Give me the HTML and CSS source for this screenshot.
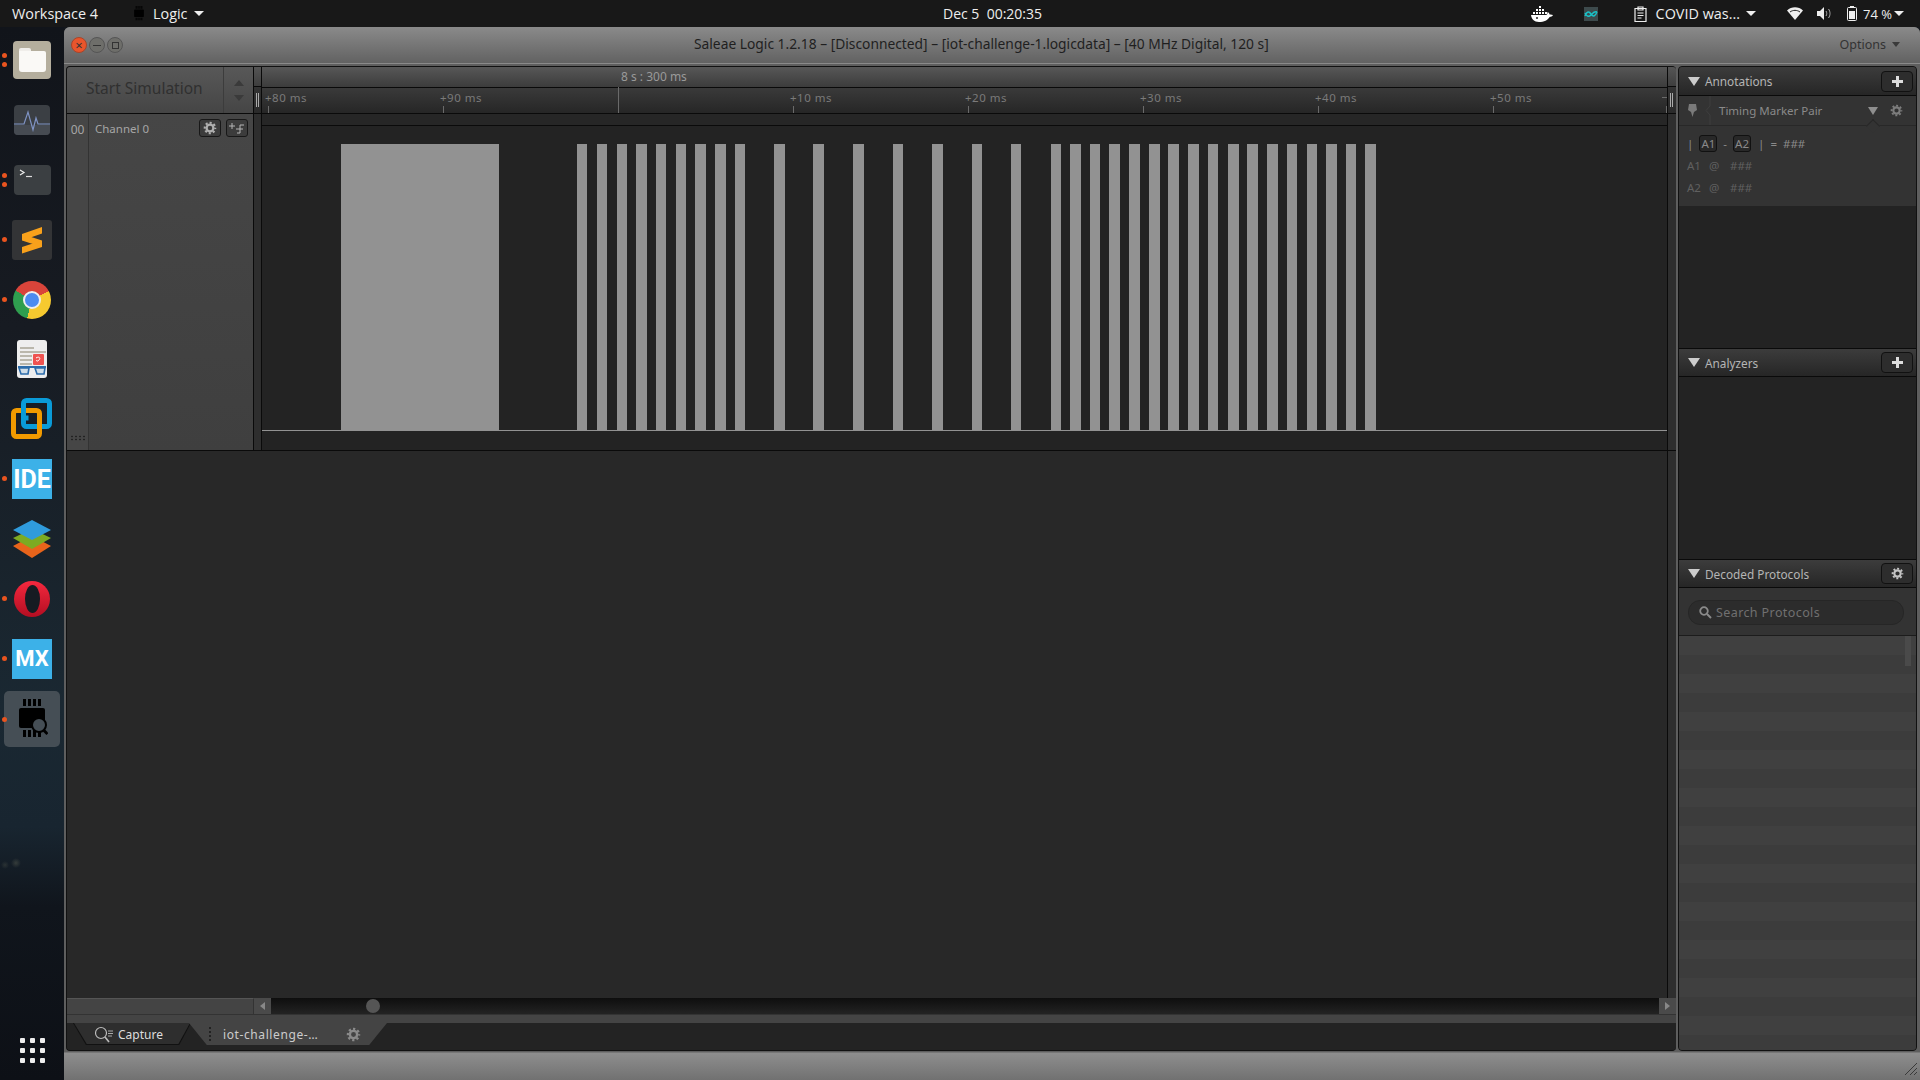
FILE: index.html
```html
<!DOCTYPE html>
<html lang="en">
<head>
    <meta charset="UTF-8">
    <meta name="viewport" content="width=device-width, initial-scale=1.0">
    <title>Saleae Logic</title>
    <link rel="stylesheet" href="styles.css">
</head>
<body>
    <svg class="defs" width="0" height="0">
        <defs>
            <symbol id="gear" viewBox="0 0 16 16">
                <circle cx="8" cy="8" r="3.9" fill="none" stroke="currentColor" stroke-width="2.6"/>
                <circle cx="8" cy="8" r="6" fill="none" stroke="currentColor" stroke-width="2.4" stroke-dasharray="2.4 2.31" stroke-dashoffset="1.2"/>
            </symbol>
            <symbol id="chip" viewBox="0 0 32 40">
                <path d="M7 0h3v7H7zM12 0h3v7h-3zM17 0h3v7h-3zM22 0h3v7h-3zM7 31h3v7H7zM12 31h3v7h-3zM17 31h3v7h-3zM22 31h3v7h-3z" fill="#000"/>
                <rect x="3" y="9" width="26" height="20" rx="2" fill="#000"/>
            </symbol>
        </defs>
    </svg>

    <header class="topbar">
        <div class="top-left">
            <span class="workspace">Workspace 4</span>
            <svg class="top-chip" width="12" height="15" viewBox="0 0 32 40"><use href="#chip"/></svg>
            <span class="app-name">Logic</span>
            <span class="caret"></span>
        </div>
        <div class="clock">Dec 5&nbsp;&nbsp;00:20:35</div>
        <div class="top-right">
            <svg class="tray-docker" width="22" height="16" viewBox="0 0 22 16">
                <path d="M8 0h2v2H8zM5 3h2v2H5zM8 3h2v2H8zM11 3h2v2h-2zM2 6h2v2H2zM5 6h2v2H5zM8 6h2v2H8zM11 6h2v2h-2zM14 6h2v2h-2z" fill="#fff"/>
                <path d="M0 9h15c1 0 1.500-1 1.600-3 1.200 .5 1.800 1.500 2 2.500 1.200-.3 2.400 0 3.400 .6-.8 1.400-2 1.900-3.400 1.900C17 14 13 16 8 16 3 16 .5 13 0 9z" fill="#fff"/>
                <circle cx="6" cy="12" r="1" fill="#222"/>
            </svg>
            <svg class="tray-teal" width="14" height="14" viewBox="0 0 14 14">
                <rect width="14" height="14" fill="#3d4a4c"/>
                <path d="M1 9c2-5 4-5 6-2s4 3 6-2M1 6c2 4 4 4 6 2s3-4 6-3" fill="none" stroke="#19c3c9" stroke-width="1.400"/>
            </svg>
            <svg class="tray-clip" width="13" height="16" viewBox="0 0 13 16">
                <path d="M1 2.500h11v13H1z M4 1h5v3H4z" fill="none" stroke="#eee" stroke-width="1.200"/>
                <path d="M3.500 7h6M3.500 9.500h6M3.500 12h4" stroke="#eee" stroke-width="1.200"/>
            </svg>
            <span class="covid">COVID was...</span>
            <span class="caret"></span>
            <svg class="tray-wifi" width="16" height="13" viewBox="0 0 16 13">
                <path d="M0 3.500C4.500-.7 11.500-.7 16 3.500L8 13z" fill="#eee"/>
                <path d="M3 5c3-2.200 7-2.200 10 0" fill="none" stroke="#222" stroke-width="1"/>
            </svg>
            <svg class="tray-sound" width="15" height="13" viewBox="0 0 15 13">
                <path d="M0 4h3l4-4v13L3 9H0z" fill="#eee"/>
                <path d="M9 4c1 1.500 1 3.500 0 5M11.500 2c2 2.500 2 6.500 0 9" fill="none" stroke="#aaa" stroke-width="1"/>
            </svg>
            <svg class="tray-battery" width="10" height="15" viewBox="0 0 10 15">
                <path d="M3 0h4v1.500H3z" fill="#eee"/>
                <rect x=".5" y="1.500" width="9" height="13" rx="1" fill="none" stroke="#eee"/>
                <rect x="2" y="5" width="6" height="8" fill="#eee"/>
            </svg>
            <span class="battery">74 %</span>
            <span class="caret"></span>
        </div>
    </header>

    <div class="desktop">
        <nav class="dock">
            <div class="dock-item">
                <span class="dot dot-two"></span>
                <div class="files-icon"><span class="folder"></span></div>
            </div>
            <div class="dock-item">
                <svg width="38" height="32" viewBox="0 0 38 32">
                    <rect x="1" y="1" width="36" height="30" rx="4" fill="#3b3f44"/>
                    <path d="M1 21a0 0 0 0 0 0 0h36v6a4 4 0 0 1-4 4H5a4 4 0 0 1-4-4z" fill="#464b52"/>
                    <path d="M1 20h10l4-12 5 18 3-12 2 6h12" fill="none" stroke="#7f93c4" stroke-width="1.200"/>
                </svg>
            </div>
            <div class="dock-item">
                <span class="dot dot-two"></span>
                <div class="term-icon">
                    <svg width="14" height="10" viewBox="0 0 14 10">
                        <path d="M1 1l4 2.500-4 2.500" fill="none" stroke="#eee" stroke-width="1.200"/>
                        <path d="M7 7.500h6" stroke="#ddd" stroke-width="1.200"/>
                    </svg>
                </div>
            </div>
            <div class="dock-item">
                <span class="dot"></span>
                <svg width="40" height="40" viewBox="0 0 40 40">
                    <rect width="40" height="40" rx="3" fill="#333436"/>
                    <path d="M10 14L30 7v6.500L10 20.500zM30 27L10 20.500V14l20 6.500zM10 27l20-6.500V27L10 33.500z" fill="#f9a11b"/>
                </svg>
            </div>
            <div class="dock-item">
                <span class="dot"></span>
                <div class="chrome-icon"><span class="chrome-eye"></span></div>
            </div>
            <div class="dock-item">
                <svg width="32" height="38" viewBox="0 0 32 38">
                    <rect x="1" width="30" height="38" rx="3" fill="#eee"/>
                    <path d="M4 8h14M4 12h26M4 16h12M4 20h12M4 24h12" stroke="#a9a597" stroke-width="1.500"/>
                    <rect x="17" y="14" width="11" height="11" rx="1" fill="#ef5350"/>
                    <path d="M20 18c3-2 5 0 3 2s-3 1-2 0" fill="none" stroke="#fff" stroke-width="1"/>
                    <path d="M2 27h28" stroke="#2c6cab" stroke-width="2"/>
                    <path d="M3 28h10l-1 6H5zM19 28h10l-1 6h-7z" fill="#cfdde8" stroke="#2c6cab" stroke-width="1.600"/>
                </svg>
            </div>
            <div class="dock-item">
                <svg width="42" height="42" viewBox="0 0 42 42">
                    <rect x="12.500" y="2.500" width="26" height="26" rx="3" fill="none" stroke="#0a9bd8" stroke-width="5"/>
                    <rect x="2.500" y="12.500" width="26" height="26" rx="3" fill="none" stroke="#f19a00" stroke-width="5"/>
                    <path d="M12.500 10v10h5" fill="none" stroke="#0a9bd8" stroke-width="5"/>
                </svg>
            </div>
            <div class="dock-item">
                <span class="dot"></span>
                <div class="square-icon">IDE</div>
            </div>
            <div class="dock-item">
                <svg width="40" height="38" viewBox="0 0 40 38">
                    <path d="M20 16L39 26 20 38 1 26z" fill="#e8641b"/>
                    <path d="M20 9L39 18 20 29 1 18z" fill="#7cab22"/>
                    <path d="M20 0L39 10 20 20 1 10z" fill="#2f9bdc"/>
                </svg>
            </div>
            <div class="dock-item">
                <span class="dot"></span>
                <svg width="38" height="38" viewBox="0 0 38 38">
                    <defs>
                        <linearGradient id="operaRed" x1="0" y1="0" x2="0" y2="1">
                            <stop offset="0" stop-color="#f5283e"/>
                            <stop offset="1" stop-color="#b30e22"/>
                        </linearGradient>
                    </defs>
                    <circle cx="19" cy="19" r="18" fill="url(#operaRed)"/>
                    <ellipse cx="19.500" cy="19" rx="7.500" ry="14" fill="#161b22"/>
                </svg>
            </div>
            <div class="dock-item">
                <span class="dot"></span>
                <div class="square-icon square-mx">MX</div>
            </div>
            <div class="dock-item dock-active">
                <span class="dot"></span>
                <svg width="32" height="40" viewBox="0 0 32 40">
                    <use href="#chip"/>
                    <circle cx="23" cy="26" r="7" fill="#454e55" stroke="#000" stroke-width="2"/>
                    <path d="M27.500 31l4 4" stroke="#000" stroke-width="3"/>
                </svg>
            </div>
            <div class="apps-grid">
                <span></span><span></span><span></span>
                <span></span><span></span><span></span>
                <span></span><span></span><span></span>
            </div>
        </nav>

        <main class="window">
            <div class="titlebar">
                <div class="win-buttons">
                    <span class="win-btn win-close">&times;</span>
                    <span class="win-btn"><i class="win-min"></i></span>
                    <span class="win-btn"><i class="win-max"></i></span>
                </div>
                <div class="win-title">Saleae Logic 1.2.18 – [Disconnected] – [iot-challenge-1.logicdata] – [40 MHz Digital, 120 s]</div>
                <div class="options">Options <span class="options-caret"></span></div>
            </div>

            <div class="content">
                <section class="capture">
                    <div class="head-row">
                        <div class="sim">
                            <div class="sim-label">Start Simulation</div>
                            <div class="sim-arrows">
                                <span class="arrow-up"></span>
                                <span class="arrow-down"></span>
                            </div>
                        </div>
                        <div class="sash sash-head"><span class="sash-top"></span><span class="sash-grip"></span></div>
                        <div class="timeline">
                            <div class="time-strip"><span class="time-origin">8 s : 300 ms</span></div>
                            <div class="ruler">
                                <div class="tick"><span>+80 ms</span></div>
                                <div class="tick"><span>+90 ms</span></div>
                                <div class="tick tick-origin"></div>
                                <div class="tick"><span>+10 ms</span></div>
                                <div class="tick"><span>+20 ms</span></div>
                                <div class="tick"><span>+30 ms</span></div>
                                <div class="tick"><span>+40 ms</span></div>
                                <div class="tick"><span>+50 ms</span></div>
                                <div class="tick tick-last"></div>
                            </div>
                        </div>
                        <div class="edge edge-head"><span class="sash-top"></span><span class="sash-grip"></span></div>
                    </div>

                    <div class="channel-row">
                        <div class="channel">
                            <div class="channel-num">
                                <span>00</span>
                                <span class="drag-dots"></span>
                            </div>
                            <div class="channel-body">
                                <span class="channel-name">Channel 0</span>
                                <span class="small-btn">
                                    <svg width="14" height="14"><use href="#gear"/></svg>
                                </span>
                                <span class="small-btn">
                                    <svg width="16" height="13" viewBox="0 0 16 13">
                                        <path d="M0 4h6M3 1v6M8 11h3V3h4M7 7h7" fill="none" stroke="#b5b5b5" stroke-width="1"/>
                                    </svg>
                                </span>
                            </div>
                        </div>
                        <div class="sash"></div>
                        <div class="trace">
                            <div class="trace-top"></div>
                            <svg class="wave" width="1405" height="305" viewBox="262 126 1405 305">
                                <g fill="#929292">
                                    <rect x="341" y="144" width="158" height="286"/>
                                    <rect x="577" y="144" width="10" height="286"/>
                                    <rect x="597" y="144" width="10" height="286"/>
                                    <rect x="617" y="144" width="10" height="286"/>
                                    <rect x="636" y="144" width="11" height="286"/>
                                    <rect x="656" y="144" width="10" height="286"/>
                                    <rect x="676" y="144" width="10" height="286"/>
                                    <rect x="695" y="144" width="11" height="286"/>
                                    <rect x="715" y="144" width="11" height="286"/>
                                    <rect x="735" y="144" width="10" height="286"/>
                                    <rect x="774" y="144" width="11" height="286"/>
                                    <rect x="813" y="144" width="11" height="286"/>
                                    <rect x="853" y="144" width="11" height="286"/>
                                    <rect x="893" y="144" width="10" height="286"/>
                                    <rect x="932" y="144" width="11" height="286"/>
                                    <rect x="972" y="144" width="10" height="286"/>
                                    <rect x="1011" y="144" width="10" height="286"/>
                                    <rect x="1051" y="144" width="10" height="286"/>
                                    <rect x="1070" y="144" width="11" height="286"/>
                                    <rect x="1090" y="144" width="10" height="286"/>
                                    <rect x="1109" y="144" width="11" height="286"/>
                                    <rect x="1129" y="144" width="11" height="286"/>
                                    <rect x="1149" y="144" width="11" height="286"/>
                                    <rect x="1168" y="144" width="11" height="286"/>
                                    <rect x="1188" y="144" width="11" height="286"/>
                                    <rect x="1208" y="144" width="10" height="286"/>
                                    <rect x="1228" y="144" width="11" height="286"/>
                                    <rect x="1247" y="144" width="11" height="286"/>
                                    <rect x="1267" y="144" width="11" height="286"/>
                                    <rect x="1287" y="144" width="10" height="286"/>
                                    <rect x="1307" y="144" width="10" height="286"/>
                                    <rect x="1326" y="144" width="11" height="286"/>
                                    <rect x="1346" y="144" width="10" height="286"/>
                                    <rect x="1365" y="144" width="11" height="286"/>
                                    <rect x="262" y="430" width="1405" height="1"/>
                                </g>
                            </svg>
                        </div>
                        <div class="edge"></div>
                    </div>

                    <div class="empty-row">
                        <div class="empty"></div>
                        <div class="edge"></div>
                    </div>

                    <div class="hscroll">
                        <div class="hscroll-left"></div>
                        <div class="scroll-btn"><span class="arrow-left"></span></div>
                        <div class="scroll-track"><span class="scroll-thumb"></span></div>
                        <div class="scroll-btn"><span class="arrow-right"></span></div>
                    </div>

                    <div class="tab-strip"></div>

                    <div class="tabs">
                        <div class="tab-capture">
                            <svg width="20" height="17" viewBox="0 0 20 17">
                                <circle cx="7" cy="7" r="5.500" fill="none" stroke="#bbb" stroke-width="1.200"/>
                                <path d="M11 11l4 5" stroke="#bbb" stroke-width="1.600"/>
                                <path d="M14 5h5M14 7.500h5M14 10h4" stroke="#aaa" stroke-width="1"/>
                            </svg>
                            <span>Capture</span>
                        </div>
                        <div class="tab-file">
                            <span class="tab-grip"></span>
                            <span class="tab-name">iot-challenge-…</span>
                            <svg class="tab-gear" width="15" height="15"><use href="#gear"/></svg>
                        </div>
                    </div>
                </section>

                <aside class="sidebar">
                    <div class="side-head">
                        <span class="side-tri"></span>
                        <span class="side-title">Annotations</span>
                        <span class="side-btn plus"></span>
                    </div>
                    <div class="marker-row">
                        <svg class="pin" width="9" height="13" viewBox="0 0 9 13"><path d="M1 0h7l1 6-3 2-1.500 5L3 8 0 6z" fill="#7a7a7a"/></svg>
                        <svg class="chevron" width="6" height="29" viewBox="0 0 6 29"><path d="M5 0v10l-4 4.500L5 19v10" fill="none" stroke="#3f3f3f"/></svg>
                        <span class="marker-name">Timing Marker Pair</span>
                        <span class="marker-tri"></span>
                        <svg class="marker-gear" width="13" height="13"><use href="#gear"/></svg>
                    </div>
                    <div class="annot-body">
                        <div class="annot-line annot-first">
                            <span>|</span><span class="key">A1</span><span>-</span><span class="key">A2</span><span class="annot-bar">|</span><span>=</span><span>###</span>
                        </div>
                        <div class="annot-line annot-dim"><span class="annot-name">A1</span><span class="annot-at">@</span><span>###</span></div>
                        <div class="annot-line annot-dim"><span class="annot-name">A2</span><span class="annot-at">@</span><span>###</span></div>
                    </div>
                    <div class="side-empty side-empty-one"></div>

                    <div class="side-head">
                        <span class="side-tri"></span>
                        <span class="side-title">Analyzers</span>
                        <span class="side-btn plus"></span>
                    </div>
                    <div class="side-empty side-empty-two"></div>

                    <div class="side-head">
                        <span class="side-tri"></span>
                        <span class="side-title">Decoded Protocols</span>
                        <span class="side-btn">
                            <svg width="13" height="13"><use href="#gear"/></svg>
                        </span>
                    </div>
                    <div class="search-box">
                        <div class="search-pill">
                            <svg width="13" height="13" viewBox="0 0 13 13">
                                <circle cx="5" cy="5" r="3.800" fill="none" stroke="#8a8a8a" stroke-width="1.800"/>
                                <path d="M8 8l4 4" stroke="#8a8a8a" stroke-width="2"/>
                            </svg>
                            <span>Search Protocols</span>
                        </div>
                    </div>
                    <div class="protocol-list"><span class="list-thumb"></span></div>
                </aside>
            </div>

            <div class="statusbar">
                <svg width="12" height="12" viewBox="0 0 12 12">
                    <path d="M0 12L12 0M5 12l7-7M9 12l3-3" stroke="#3a3a3a" stroke-width="1"/>
                </svg>
            </div>
        </main>
    </div>
</body>
</html>
```

FILE: styles.css
```css
* {
    box-sizing: border-box;
}
html, body {
    margin: 0;
    padding: 0;
    height: 100%;
    overflow: hidden;
}
body {
    width: 1920px;
    height: 1080px;
    display: flex;
    flex-direction: column;
    font-family: "Noto Sans", "Open Sans", sans-serif;
    background-color: #14171c;
}
.defs {
    position: absolute;
}

/* top bar */
.topbar {
    height: 27px;
    flex: none;
    display: flex;
    justify-content: space-between;
    align-items: center;
    background-color: #181818;
    color: #eee;
    font-family: "Open Sans", sans-serif;
    font-size: 14.400px;
    position: relative;
}
.top-left, .top-right {
    display: flex;
    align-items: center;
}
.top-left {
    padding-left: 12px;
}
.top-chip {
    margin-left: 35px;
}
.app-name {
    margin-left: 8px;
}
.caret {
    width: 0;
    height: 0;
    border-left: 5px solid transparent;
    border-right: 5px solid transparent;
    border-top: 5px solid #eee;
    margin-left: 6px;
}
.clock {
    position: absolute;
    left: 943px;
    top: 4px;
    font-size: 14px;
}
.top-right {
    padding-right: 16px;
}
.tray-teal {
    margin-left: 31px;
}
.tray-clip {
    margin-left: 36px;
}
.covid {
    margin-left: 9px;
}
.tray-wifi {
    margin-left: 31px;
}
.tray-sound {
    margin-left: 14px;
}
.tray-battery {
    margin-left: 15px;
}
.battery {
    margin-left: 6px;
    margin-right: -4px;
    font-size: 13px;
}

/* dock */
.desktop {
    flex: 1;
    display: flex;
    min-height: 0;
}
.dock {
    width: 64px;
    flex: none;
    padding-top: 3px;
    padding-bottom: 17px;
    display: flex;
    flex-direction: column;
    align-items: center;
    background:
        radial-gradient(circle at 16px 836px, rgba(170, 170, 130, 0.22), transparent 5px),
        radial-gradient(circle at 5px 838px, rgba(170, 170, 130, 0.15), transparent 4px),
        linear-gradient(#11141a 0, #171b22 300px, #1a2832 680px, #182530 800px, #10151c 880px, #0d1016 1053px);
}
.dock-item {
    width: 56px;
    height: 59.900px;
    flex: none;
    display: flex;
    align-items: center;
    justify-content: center;
    position: relative;
}
.dock-active {
    height: 56px;
    margin-top: 2px;
    border-radius: 5px;
    background-color: #454e55;
}
.dot {
    position: absolute;
    left: -2px;
    top: 27px;
    width: 5px;
    height: 5px;
    border-radius: 50%;
    background-color: #e9541f;
}
.dot-two {
    top: 23px;
    box-shadow: 0 9px 0 #e9541f;
}
.dock-active .dot {
    top: 26px;
}
.files-icon {
    width: 38px;
    height: 38px;
    padding-top: 3px;
    border-radius: 4px;
    background-color: #b4ae9d;
    display: flex;
    align-items: center;
    justify-content: center;
}
.folder {
    width: 27px;
    height: 21px;
    background-color: #faf9f6;
    border-radius: 0 2px 3px 3px;
    position: relative;
}
.folder::before {
    content: "";
    position: absolute;
    left: 0;
    top: -3px;
    width: 12px;
    height: 3px;
    background-color: #f0eeea;
    border-radius: 2px 2px 0 0;
}
.term-icon {
    width: 37px;
    height: 30px;
    padding: 4px 0 0 5px;
    border-radius: 4px;
    background-color: #3b3f42;
    line-height: 0;
}
.chrome-icon {
    width: 38px;
    height: 38px;
    border-radius: 50%;
    display: flex;
    align-items: center;
    justify-content: center;
    background: conic-gradient(#d9443a 0 62deg, #f6c92f 62deg 195deg, #2f9e4f 195deg 300deg, #d9443a 300deg);
}
.chrome-eye {
    width: 18px;
    height: 18px;
    border-radius: 50%;
    background-color: #4b8bf0;
    border: 2px solid #eee;
}
.square-icon {
    width: 40px;
    height: 40px;
    display: flex;
    align-items: center;
    justify-content: center;
    background-color: #3cb1e8;
    color: #fff;
    font-family: "Liberation Sans Narrow", "Roboto", sans-serif;
    font-weight: bold;
    font-size: 25px;
}
.square-mx {
    font-size: 22px;
}
.apps-grid {
    margin-top: auto;
    width: 25px;
    display: grid;
    grid-template-columns: repeat(3, 5px);
    gap: 5px;
}
.apps-grid span {
    width: 5px;
    height: 5px;
    border-radius: 1px;
    background-color: #eee;
}

/* window */
.window {
    flex: 1;
    display: flex;
    flex-direction: column;
    min-width: 0;
    background-color: #5e5e5e;
    border-radius: 6px 6px 0 0;
    overflow: hidden;
}
.titlebar {
    height: 37px;
    flex: none;
    display: flex;
    align-items: center;
    padding: 0 14px 0 7px;
    position: relative;
    background: linear-gradient(#8a8a8a, #626262);
    border-bottom: 1px solid #8a8a8a;
}
.win-buttons {
    display: flex;
    gap: 2px;
}
.win-btn {
    width: 16px;
    height: 16px;
    border-radius: 50%;
    display: flex;
    align-items: center;
    justify-content: center;
    background-color: #6e6e6a;
    border: 1px solid #555;
    color: #333;
}
.win-close {
    background-color: #e9552c;
    border-color: #a9452a;
    font-size: 13px;
    line-height: 1;
}
.win-min {
    width: 8px;
    height: 1px;
    background-color: #333;
}
.win-max {
    width: 7px;
    height: 7px;
    border: 1px solid #333;
}
.win-title {
    position: absolute;
    left: 630px;
    top: 8px;
    font-size: 13.800px;
    line-height: 18px;
    color: #1f1f1f;
    white-space: nowrap;
}
.options {
    margin-left: auto;
    margin-right: 6px;
    margin-bottom: 2px;
    font-size: 12.500px;
    color: #333;
    display: flex;
    align-items: center;
    gap: 6px;
}
.options-caret {
    border-left: 4px solid transparent;
    border-right: 4px solid transparent;
    border-top: 5px solid #3a3a3a;
}
.content {
    flex: 1;
    min-height: 0;
    display: flex;
    gap: 2px;
    padding: 2px 3px 1px 2px;
}
.statusbar {
    height: 28px;
    flex: none;
    display: flex;
    align-items: flex-end;
    justify-content: flex-end;
    padding: 0 3px 5px 0;
    background: linear-gradient(#8e8e8e, #717171);
    border-top: 1px solid #777;
}

/* capture side */
.capture {
    width: 1610px;
    flex: none;
    display: flex;
    flex-direction: column;
    background-color: #282828;
    border: 1px solid #111;
    border-width: 1px 0 1px 1px;
    border-radius: 4px;
    overflow: hidden;
    color: #a5a5a5;
    font-size: 12px;
}
.head-row {
    height: 47px;
    flex: none;
    display: flex;
    border-bottom: 1px solid #0a0a0a;
}
.sim {
    width: 187px;
    flex: none;
    display: flex;
    background: linear-gradient(#585858, #454545);
    border-right: 1px solid #0a0a0a;
}
.sim-label {
    width: 157px;
    padding: 10px 0 0 19px;
    font-size: 15.500px;
    color: #303030;
    border-right: 1px solid #3c3c3c;
}
.sim-arrows {
    flex: 1;
    display: flex;
    flex-direction: column;
    align-items: center;
    gap: 9px;
    padding-top: 13px;
}
.arrow-up {
    border-left: 5px solid transparent;
    border-right: 5px solid transparent;
    border-bottom: 6px solid #3a3a3a;
}
.arrow-down {
    border-left: 5px solid transparent;
    border-right: 5px solid transparent;
    border-top: 6px solid #3a3a3a;
}
.sash {
    width: 8px;
    flex: none;
    background-color: #2e2e2e;
    border-right: 1px solid #0a0a0a;
}
.sash-head {
    background: linear-gradient(#3a3a3a, #2a2a2a);
}
.sash-top {
    display: block;
    height: 20px;
    background: linear-gradient(#555, #3e3e3e);
    border-bottom: 1px solid #0a0a0a;
}
.sash-grip {
    display: block;
    width: 3px;
    height: 14px;
    margin: 6px 0 0 2px;
    border-left: 1px solid #aaa;
    border-right: 1px solid #aaa;
}
.timeline {
    flex: 1;
    min-width: 0;
    display: flex;
    flex-direction: column;
    overflow: hidden;
}
.time-strip {
    height: 21px;
    flex: none;
    padding: 2px 0 0 359px;
    background: linear-gradient(#575757, #3c3c3c);
    border-bottom: 1px solid #0a0a0a;
    font-size: 12px;
    line-height: 15px;
    color: #9a9a9a;
}
.ruler {
    flex: 1;
    display: flex;
    padding-left: 1px;
    background: linear-gradient(#3a3a3a, #262626);
    color: #7a7a7a;
    font-size: 11.500px;
    letter-spacing: 0.500px;
}
.tick {
    width: 175px;
    flex: none;
    padding: 2px 0 0 2px;
    position: relative;
    line-height: 15px;
}
.tick::after {
    content: "";
    position: absolute;
    left: 5px;
    bottom: 0;
    width: 1px;
    height: 7px;
    background-color: #6a6a6a;
}
.tick-origin::after {
    height: 26px;
}
.tick-last::before {
    content: "";
    position: absolute;
    left: -1px;
    top: 9px;
    width: 5px;
    height: 1px;
    background-color: #6a6a6a;
}
.tick-last::after {
    left: 3px;
}
.edge {
    width: 9px;
    flex: none;
    background-color: #2e2e2e;
    border-left: 1px solid #0a0a0a;
}
.edge-head {
    background: linear-gradient(#3a3a3a, #2a2a2a);
}
.channel-row {
    height: 337px;
    flex: none;
    display: flex;
    border-bottom: 1px solid #0a0a0a;
}
.channel {
    width: 187px;
    flex: none;
    display: flex;
    border-right: 1px solid #0a0a0a;
}
.channel-num {
    width: 22px;
    flex: none;
    display: flex;
    flex-direction: column;
    justify-content: space-between;
    align-items: center;
    padding: 7px 0 9px;
    background-color: #464646;
    border-right: 1px solid #333;
}
.drag-dots {
    width: 15px;
    height: 6px;
    background-image: radial-gradient(#222 1px, transparent 1.500px);
    background-size: 4px 3px;
}
.channel-body {
    flex: 1;
    display: flex;
    align-items: flex-start;
    padding: 5px 0 0 6px;
    background: linear-gradient(#464646, #3f3f3f);
}
.channel-name {
    flex: 1;
    font-size: 11.500px;
    margin-top: 2px;
}
.small-btn {
    width: 22px;
    height: 18px;
    display: flex;
    align-items: center;
    justify-content: center;
    margin-right: 5px;
    background-color: #3c3c3c;
    border: 1px solid #181818;
    border-radius: 3px;
    color: #b0b0b0;
}
.trace {
    flex: 1;
    min-width: 0;
    display: flex;
    flex-direction: column;
    background-color: #232323;
}
.trace-top {
    height: 12px;
    flex: none;
    background-color: #262626;
    border-bottom: 1px solid #0a0a0a;
}
.wave {
    flex: none;
    display: block;
}
.empty-row {
    flex: 1;
    min-height: 0;
    display: flex;
}
.empty {
    flex: 1;
}

/* scrollbar and tabs */
.hscroll {
    height: 16px;
    flex: none;
    display: flex;
    background-color: #444;
}
.hscroll-left {
    width: 187px;
    flex: none;
    background-color: #444;
    border-top: 1px solid #555;
    border-right: 1px solid #333;
}
.scroll-btn {
    width: 17px;
    flex: none;
    display: flex;
    align-items: center;
    justify-content: center;
    background-color: #4a4a4a;
}
.arrow-left {
    border-top: 4px solid transparent;
    border-bottom: 4px solid transparent;
    border-right: 5px solid #888;
}
.arrow-right {
    border-top: 4px solid transparent;
    border-bottom: 4px solid transparent;
    border-left: 5px solid #888;
}
.scroll-track {
    flex: 1;
    padding-left: 95px;
    display: flex;
    align-items: center;
    background: linear-gradient(#0e0e0e, #232323);
}
.scroll-thumb {
    width: 14px;
    height: 14px;
    border-radius: 50%;
    background-color: #555;
}
.tab-strip {
    height: 9px;
    flex: none;
    background-color: #444;
    border-top: 1px solid #333;
}
.tabs {
    height: 27px;
    flex: none;
    display: flex;
    background-color: #232323;
}
.tab-capture {
    width: 118px;
    height: 22px;
    flex: none;
    margin-left: 6px;
    padding-left: 21px;
    display: flex;
    align-items: center;
    gap: 4px;
    position: relative;
    z-index: 0;
    background-color: #111;
    color: #ddd;
    clip-path: polygon(0 0, 100% 0, 90% 100%, 11% 100%);
}
.tab-capture::before {
    content: "";
    position: absolute;
    inset: 0 1px 1px 1px;
    z-index: -1;
    background-color: #2e2e2e;
    clip-path: polygon(0 0, 100% 0, 90% 100%, 11% 100%);
}
.tab-file {
    width: 198px;
    height: 22px;
    flex: none;
    margin-left: -2px;
    display: flex;
    align-items: center;
    padding-left: 20px;
    background-color: #444;
    color: #ccc;
    clip-path: polygon(0 0, 100% 0, 91% 100%, 9% 100%);
}
.tab-grip {
    width: 2px;
    height: 14px;
    border-left: 2px dotted #222;
}
.tab-name {
    margin-left: 12px;
    white-space: nowrap;
    letter-spacing: 0.600px;
}
.tab-gear {
    margin-left: 28px;
    color: #8a8a8a;
}

/* right side */
.sidebar {
    flex: 1;
    min-width: 0;
    display: flex;
    flex-direction: column;
    background-color: #232323;
    border: 1px solid #111;
    border-radius: 4px;
    overflow: hidden;
    font-size: 11.800px;
    color: #b5b5b5;
}
.side-head {
    height: 29px;
    flex: none;
    display: flex;
    align-items: center;
    padding: 0 3px 0 9px;
    background: linear-gradient(#3c3c3c, #262626);
    border-bottom: 1px solid #0a0a0a;
}
.side-empty + .side-head {
    border-top: 1px solid #0a0a0a;
}
.side-tri {
    border-left: 6px solid transparent;
    border-right: 6px solid transparent;
    border-top: 9px solid #ccc;
}
.side-title {
    flex: 1;
    margin-left: 5px;
}
.side-btn {
    width: 32px;
    height: 21px;
    display: flex;
    align-items: center;
    justify-content: center;
    background-color: #2d2d2d;
    border: 1px solid #111;
    border-radius: 4px;
    color: #c5c5c5;
}
.plus {
    position: relative;
}
.plus::before {
    content: "";
    width: 11px;
    height: 3px;
    background-color: #ddd;
}
.plus::after {
    content: "";
    position: absolute;
    width: 3px;
    height: 11px;
    background-color: #ddd;
}
.marker-row {
    height: 30px;
    flex: none;
    display: flex;
    align-items: center;
    padding-left: 9px;
    position: relative;
    background-color: #333;
    border-bottom: 1px solid #282828;
    color: #8a8a8a;
    font-size: 11.500px;
}
.marker-row::after {
    content: "";
    position: absolute;
    left: 189px;
    bottom: -6px;
    width: 9px;
    height: 9px;
    background-color: #333;
    border-top: 1px solid #282828;
    border-left: 1px solid #282828;
    transform: rotate(45deg);
}
.chevron {
    margin-left: 8px;
}
.marker-name {
    flex: 1;
    margin-left: 8px;
}
.marker-tri {
    border-left: 5px solid transparent;
    border-right: 5px solid transparent;
    border-top: 8px solid #8f8f8f;
    margin-right: 12px;
}
.marker-gear {
    margin-right: 13px;
    color: #7d7d7d;
}
.annot-body {
    height: 80px;
    flex: none;
    padding: 6px 0 0 8px;
    background-color: #333;
    color: #8a8a8a;
    font-size: 11.500px;
}
.annot-line {
    height: 22px;
    display: flex;
    align-items: center;
    gap: 6px;
}
.annot-bar {
    margin-left: 1px;
}
.key {
    width: 18px;
    height: 17px;
    display: flex;
    align-items: center;
    justify-content: center;
    background-color: #282828;
    border: 1px solid #111;
    border-radius: 3px;
}
.annot-dim {
    color: #606060;
    gap: 0;
}
.annot-name {
    width: 22px;
}
.annot-at {
    width: 21px;
}
.side-empty-one {
    height: 142px;
    flex: none;
}
.side-empty-two {
    height: 182px;
    flex: none;
}
.search-box {
    height: 48px;
    flex: none;
    padding: 12px 12px 0 9px;
    background-color: #333;
    border-bottom: 1px solid #1c1c1c;
}
.search-pill {
    height: 25px;
    display: flex;
    align-items: center;
    gap: 4px;
    padding-left: 10px;
    border-radius: 12px;
    background-color: #2c2c2c;
    border: 1px solid #262626;
    color: #707070;
    font-size: 12.500px;
    letter-spacing: 0.400px;
}
.protocol-list {
    flex: 1;
    min-height: 0;
    display: flex;
    justify-content: flex-end;
    padding-right: 5px;
    background: repeating-linear-gradient(#404040 0, #404040 19px, #3c3c3c 19px, #3c3c3c 38px);
}
.list-thumb {
    width: 6px;
    height: 30px;
    background-color: #4a4a4a;
}
```
